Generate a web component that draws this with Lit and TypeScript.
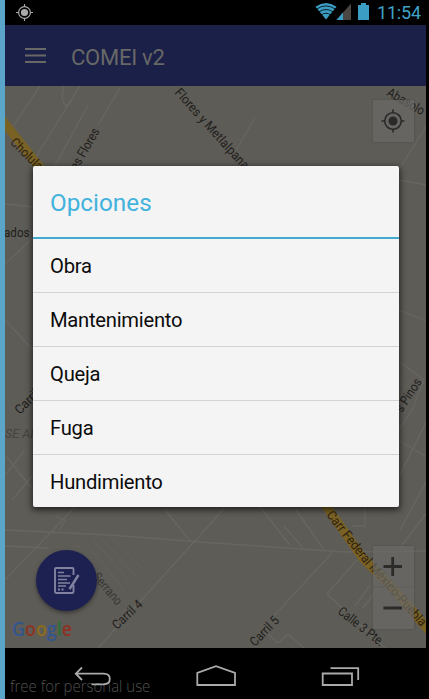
import { LitElement, html, svg, css } from "lit";
import { customElement } from "lit/decorators.js";

const OPTIONS = ["Obra", "Mantenimiento", "Queja", "Fuga", "Hundimiento"];

interface Label { text: string; x: number; y: number; angle: number; length?: number; cls?: string; }

const LABELS: Label[] = [
  { text: "Flores y Metlalpana", x: 174, y: 93, angle: 48, length: 104 },
  { text: "Cholula", x: 9.5, y: 143, angle: 45, length: 40, cls: "road" },
  { text: "es Flores", x: 77, y: 171, angle: -60, length: 46 },
  { text: "Abasolo", x: 386, y: 95, angle: 30, length: 41 },
  { text: "ados 2", x: 4, y: 237, angle: 0, length: 35 },
  { text: "Carril", x: 20, y: 415, angle: -46, length: 29 },
  { text: "s Pinos", x: 402, y: 413, angle: -57, length: 37 },
  { text: "Serrano", x: 92, y: 577, angle: 50, length: 38, cls: "faint" },
  { text: "Carril 4", x: 117, y: 630, angle: -43, length: 36 },
  { text: "Carril 5", x: 255, y: 647, angle: -46, length: 36 },
  { text: "Calle 3 Pte.", x: 337, y: 613, angle: 38, length: 55 },
];

const STREETS = [
  "M40 86L12 128", "M80 86L40 150L32 166", "M64 86Q60 100 66 106L72 100", "M88 105L55 166", "M120 88L98 125",
  "M255 118L236 150", "M427 125L400 168", "M398 180L427 185", "M5 204L33 207", "M5 264L33 238", "M5 320L33 350",
  "M5 455L33 490", "M5 475L25 450M12 500L33 475", "M398 310L427 321", "M400 362L424 380L412 410L398 432",
  "M398 440L427 457", "M427 420L400 475", "M427 480L400 530",
  "M5 530L110 535L214 543L345 552L427 551", "M5 580L75 507", "M55 516L65 520L60 530",
  "M165 510L191 542", "M214 520L98 648", "M260 507L290 545", "M284 526L303 548", "M296 510L325 551",
  "M332 553L270 620", "M357 560L327 594L385 648", "M427 512L400 548", "M355 606L370 585M363 608L378 588",
  "M266 632L278 643L288 634L304 648", "M365 508V526H352M5 546L48 548", "M225 507L205 530",
];

@customElement("town-map")
class TownMap extends LitElement {
  static styles = css`
    :host { display: block; }
    svg { display: block; width: 100%; height: 100%; }
    text { font-family: Roboto, "Liberation Sans", sans-serif; font-size: 13px; fill: #1f1e1c; }
    .road { fill: #2d2110; }
    .faint { fill: #373633; }
    .area { font-size: 13px; font-style: italic; fill: #454440; }
    .street { fill: none; stroke: #676661; stroke-width: 1.3; }
    .lots { fill: none; stroke: #64635e; stroke-width: 0.8; }
    .highway { fill: none; stroke: #7a6224; stroke-width: 9; }
    .logo { font-family: "Open Sans", sans-serif; font-size: 19px; font-weight: 600; }
  `;
  render() {
    return html`<svg viewBox="5 86 421 562" preserveAspectRatio="none">
      <rect x="5" y="86" width="421" height="562" fill="#5e5c57"></rect>
      ${STREETS.map((d) => svg`<path class="street" d=${d}></path>`)}
      <path class="lots" d="M78 545L118 600M85 541L125 592M92 538L132 584M99 535L139 580M105 532L146 572"></path>
      <path class="highway" d="M2 120L50 180M322 500L362 557L398 594L432 634"></path>
      ${LABELS.map((l) => svg`<text class=${l.cls ?? ""} textLength=${l.length ?? 30} lengthAdjust="spacingAndGlyphs"
        transform="translate(${l.x} ${l.y}) rotate(${l.angle})">${l.text}</text>`)}
      <text class="area" x="5" y="438" textLength="34" lengthAdjust="spacingAndGlyphs">SE AN</text>
      <path id="federal" fill="none" d="M326 515L363 562L430 637"></path>
      <text class="road" textLength="147" lengthAdjust="spacingAndGlyphs"><textPath href="#federal">Carr Federal México-Puebla</textPath></text>
      <text class="logo" x="12" y="636" textLength="60" lengthAdjust="spacingAndGlyphs"><tspan fill="#34568f">G</tspan><tspan fill="#8c3424">o</tspan><tspan fill="#8a6d1a">o</tspan><tspan fill="#34568f">g</tspan><tspan fill="#2b7239">l</tspan><tspan fill="#8c3424">e</tspan></text>
    </svg>`;
  }
}

@customElement("options-dialog")
class OptionsDialog extends LitElement {
  static styles = css`
    :host { display: block; box-sizing: border-box; background: #f4f4f4; border-radius: 2px; box-shadow: 0 2px 6px 1px rgba(0,0,0,.65); font-family: Roboto, "Liberation Sans", sans-serif; overflow: hidden; }
    .title { box-sizing: border-box; height: 73px; padding-left: 17px; line-height: 74px; font-size: 24.3px; color: #43b2dd; border-bottom: 2px solid #43abd1; }
    .option { box-sizing: border-box; height: 54px; padding-left: 17px; line-height: 54px; font-size: 20.2px; letter-spacing: -0.25px; color: #0c0c0c; border-bottom: 1px solid #d3d3d3; }
    .option:last-child { border-bottom: 0; }
  `;
  render() {
    return html`<div class="title">Opciones</div>
      ${OPTIONS.map((o) => html`<div class="option">${o}</div>`)}`;
  }
}

@customElement("app-root")
class AppRoot extends LitElement {
  static styles = css`
    :host { display: block; width: 429px; height: 699px; box-sizing: border-box; position: relative; overflow: hidden; background: #000; border-left: 5px solid #5ba5ca; font-family: Roboto, "Liberation Sans", sans-serif; }
    svg { display: block; }
    .screen { display: flex; flex-direction: column; width: 421px; height: 699px; }
    .status { height: 25px; flex: none; display: flex; align-items: center; justify-content: space-between; padding: 0 5px 0 11px; }
    .indicators { display: flex; align-items: center; }
    .clock { font-size: 18px; line-height: 25px; color: #3fa2c8; width: 44px; margin-left: 7px; letter-spacing: -0.2px; white-space: nowrap; }
    .bar { height: 61px; flex: none; display: flex; align-items: center; background: #1b2048; padding-left: 20px; }
    .heading { margin-left: 25px; font-size: 22px; letter-spacing: -0.25px; color: #686866; padding-top: 3px; }
    .map { height: 562px; flex: none; position: relative; }
    town-map { width: 100%; height: 100%; }
    .locate, .zoom { position: absolute; left: 368px; width: 41px; background: rgba(106,105,102,.72); box-shadow: 0 0 2px rgba(0,0,0,.2); }
    .locate { top: 14px; height: 42px; }
    .zoom { top: 460px; height: 83px; }
    .fab { position: absolute; left: 31px; top: 463.5px; width: 61px; height: 61px; border-radius: 50%; background: #1c2152; box-shadow: 0 2px 4px rgba(0,0,0,.4); display: grid; place-items: center; }
    .nav { height: 51px; flex: none; }
    .mark { position: absolute; left: 5px; top: 676px; font: 300 17px/20px "Open Sans", sans-serif; color: #505050; white-space: nowrap; transform: scaleX(.88); transform-origin: left; }
    .keys { position: absolute; left: 0; top: 648px; }
    options-dialog { position: absolute; left: 28px; top: 166px; width: 365.5px; height: 341px; }
  `;
  render() {
    return html`<div class="screen">
      <div class="status">
        <svg width="18" height="22" viewBox="0 0 18 22" fill="none" stroke="#aaa" stroke-width="1.2"><circle cx="8.5" cy="10.5" r="5.9"></circle><circle cx="8.5" cy="10.5" r="3.6" fill="#aaa" stroke="none"></circle><path d="M8.5 2V5M8.5 16V19M0 10.5H3M14 10.5H17"></path></svg>
        <div class="indicators">
          <svg width="55" height="25" viewBox="315 0 55 25">
            <path d="M326 19.5L315.5 6.8Q326 -.6 336.5 6.8Z" fill="#3b9dc3"></path>
            <path d="M316.5 9.2Q326 2.6 335.5 9.2M318.8 12Q326 7 333.2 12M321.2 14.9Q326 11.5 330.8 14.9" fill="none" stroke="#000" stroke-width=".8"></path>
            <path d="M351 3.5V20H336.5Z" fill="#4a4644"></path><path d="M343 12.6V20H336.5Z" fill="#3b9dc3"></path>
            <path d="M358 5H361V3H366V5H369V20H358Z" fill="#3b9dc3"></path>
          </svg>
          <span class="clock">11:54</span>
        </div>
      </div>
      <div class="bar">
        <svg width="21" height="17" viewBox="0 0 21 17" fill="#686866"><path d="M0 1H21V3H0ZM0 7.5H21V9.5H0ZM0 14H21V16H0Z"></path></svg>
        <div class="heading">COMEI v2</div>
      </div>
      <div class="map">
        <town-map></town-map>
        <div class="locate"><svg width="41" height="42" viewBox="0 0 41 42" fill="none" stroke="#292929" stroke-width="1.6"><circle cx="20" cy="21" r="8.3"></circle><circle cx="20" cy="21" r="4.5" fill="#292929" stroke="none"></circle><path d="M20 9.5V13M20 29V32.5M8.5 21H12M28 21H31.5"></path></svg></div>
        <div class="zoom"><svg width="41" height="83" viewBox="0 0 41 83" fill="none" stroke="#2b2b2a" stroke-width="2.8"><path d="M10.5 20.5H29M19.7 11V30M10.5 62H29"></path><path d="M0 41H41" stroke="#5e5e5a" stroke-width="1"></path></svg></div>
        <div class="fab"><svg width="27" height="29" viewBox="0 0 27 29" fill="none" stroke="#8183a0" stroke-width="1.9"><path d="M20.5 9V3.2Q20.5 2 19.3 2H3.2Q2 2 2 3.2V25.8Q2 27 3.2 27H19.3Q20.5 27 20.5 25.8V19"></path><path d="M5 6.5H11M5 10H17.5M5 13.5H14M5 17H17M5 20H13" stroke-width="1.6"></path><path d="M5 23.5H7M8.5 23.5H10.5" stroke-width="2"></path><path d="M25.5 9L18.5 20L16.5 23" stroke-width="2.4"></path></svg></div>
      </div>
      <div class="nav"></div>
    </div>
    <div class="mark">free for personal use</div>
    <svg class="keys" width="421" height="51" viewBox="5 648 421 51" fill="none" stroke="#aaa" stroke-width="1.8"><path d="M82 667.5L75.8 673.7L82 680M76 673.7H103.5Q109.8 673.7 109.8 679Q109.8 684.3 103.5 684.3H91.5"></path><path d="M197.3 685V673L216 666.2L235 673V685Z"></path><path d="M322.7 673.5H352V685H322.7ZM330.5 668.2H358.2V680"></path></svg>
    <options-dialog></options-dialog>`;
  }
}
